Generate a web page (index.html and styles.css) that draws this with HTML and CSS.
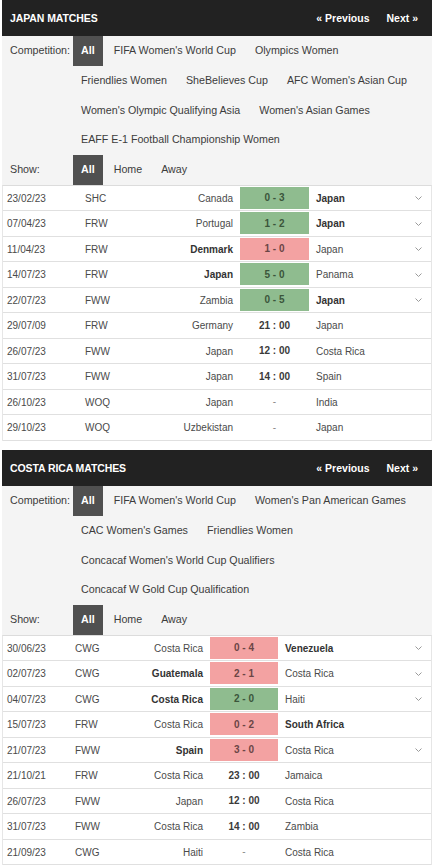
FILE: index.html
```html
<!DOCTYPE html>
<html>
<head>
<meta charset="utf-8">
<link rel="stylesheet" href="styles.css">
</head>
<body>
<div class="page">

<section class="block">
  <div class="head">
    <div class="title">JAPAN MATCHES</div>
    <div class="nav"><span>« Previous</span><span>Next »</span></div>
  </div>
  <div class="filters">
    <div class="frow">
      <div class="flabel">Competition:</div>
      <div class="opts">
        <span class="opt active">All</span>
        <span class="opt">FIFA Women's World Cup</span>
        <span class="opt">Olympics Women</span>
        <span class="opt">Friendlies Women</span>
        <span class="opt">SheBelieves Cup</span>
        <span class="opt">AFC Women's Asian Cup</span>
        <span class="opt">Women's Olympic Qualifying Asia</span>
        <span class="opt">Women's Asian Games</span>
        <span class="opt">EAFF E-1 Football Championship Women</span>
      </div>
    </div>
    <div class="frow">
      <div class="flabel">Show:</div>
      <div class="opts">
        <span class="opt active">All</span>
        <span class="opt">Home</span>
        <span class="opt">Away</span>
      </div>
    </div>
  </div>
  <div class="table jp">
    <div class="row"><span class="date">23/02/23</span><span class="comp">SHC</span><span class="home">Canada</span><span class="score win">0 - 3</span><span class="away b">Japan</span><span class="chev"><svg width="7" height="4" viewBox="0 0 7 4"><polyline points="0.5,0.5 3.5,3.5 6.5,0.5" fill="none" stroke="#9a9a9a" stroke-width="1"/></svg></span></div>
    <div class="row"><span class="date">07/04/23</span><span class="comp">FRW</span><span class="home">Portugal</span><span class="score win">1 - 2</span><span class="away b">Japan</span><span class="chev"><svg width="7" height="4" viewBox="0 0 7 4"><polyline points="0.5,0.5 3.5,3.5 6.5,0.5" fill="none" stroke="#9a9a9a" stroke-width="1"/></svg></span></div>
    <div class="row"><span class="date">11/04/23</span><span class="comp">FRW</span><span class="home b">Denmark</span><span class="score loss">1 - 0</span><span class="away">Japan</span><span class="chev"><svg width="7" height="4" viewBox="0 0 7 4"><polyline points="0.5,0.5 3.5,3.5 6.5,0.5" fill="none" stroke="#9a9a9a" stroke-width="1"/></svg></span></div>
    <div class="row"><span class="date">14/07/23</span><span class="comp">FRW</span><span class="home b">Japan</span><span class="score win">5 - 0</span><span class="away">Panama</span><span class="chev"><svg width="7" height="4" viewBox="0 0 7 4"><polyline points="0.5,0.5 3.5,3.5 6.5,0.5" fill="none" stroke="#9a9a9a" stroke-width="1"/></svg></span></div>
    <div class="row"><span class="date">22/07/23</span><span class="comp">FWW</span><span class="home">Zambia</span><span class="score win">0 - 5</span><span class="away b">Japan</span><span class="chev"><svg width="7" height="4" viewBox="0 0 7 4"><polyline points="0.5,0.5 3.5,3.5 6.5,0.5" fill="none" stroke="#9a9a9a" stroke-width="1"/></svg></span></div>
    <div class="row"><span class="date">29/07/09</span><span class="comp">FRW</span><span class="home">Germany</span><span class="score time">21 : 00</span><span class="away">Japan</span><span class="chev"></span></div>
    <div class="row"><span class="date">26/07/23</span><span class="comp">FWW</span><span class="home">Japan</span><span class="score time">12 : 00</span><span class="away">Costa Rica</span><span class="chev"></span></div>
    <div class="row"><span class="date">31/07/23</span><span class="comp">FWW</span><span class="home">Japan</span><span class="score time">14 : 00</span><span class="away">Spain</span><span class="chev"></span></div>
    <div class="row"><span class="date">26/10/23</span><span class="comp">WOQ</span><span class="home">Japan</span><span class="score dash">-</span><span class="away">India</span><span class="chev"></span></div>
    <div class="row"><span class="date">29/10/23</span><span class="comp">WOQ</span><span class="home">Uzbekistan</span><span class="score dash">-</span><span class="away">Japan</span><span class="chev"></span></div>
  </div>
</section>

<section class="block second">
  <div class="head">
    <div class="title">COSTA RICA MATCHES</div>
    <div class="nav"><span>« Previous</span><span>Next »</span></div>
  </div>
  <div class="filters">
    <div class="frow">
      <div class="flabel">Competition:</div>
      <div class="opts">
        <span class="opt active">All</span>
        <span class="opt">FIFA Women's World Cup</span>
        <span class="opt">Women's Pan American Games</span>
        <span class="opt">CAC Women's Games</span>
        <span class="opt">Friendlies Women</span>
        <span class="opt">Concacaf Women's World Cup Qualifiers</span>
        <span class="opt">Concacaf W Gold Cup Qualification</span>
      </div>
    </div>
    <div class="frow">
      <div class="flabel">Show:</div>
      <div class="opts">
        <span class="opt active">All</span>
        <span class="opt">Home</span>
        <span class="opt">Away</span>
      </div>
    </div>
  </div>
  <div class="table cr">
    <div class="row"><span class="date">30/06/23</span><span class="comp">CWG</span><span class="home">Costa Rica</span><span class="score loss">0 - 4</span><span class="away b">Venezuela</span><span class="chev"><svg width="7" height="4" viewBox="0 0 7 4"><polyline points="0.5,0.5 3.5,3.5 6.5,0.5" fill="none" stroke="#9a9a9a" stroke-width="1"/></svg></span></div>
    <div class="row"><span class="date">02/07/23</span><span class="comp">CWG</span><span class="home b">Guatemala</span><span class="score loss">2 - 1</span><span class="away">Costa Rica</span><span class="chev"><svg width="7" height="4" viewBox="0 0 7 4"><polyline points="0.5,0.5 3.5,3.5 6.5,0.5" fill="none" stroke="#9a9a9a" stroke-width="1"/></svg></span></div>
    <div class="row"><span class="date">04/07/23</span><span class="comp">CWG</span><span class="home b">Costa Rica</span><span class="score win">2 - 0</span><span class="away">Haiti</span><span class="chev"><svg width="7" height="4" viewBox="0 0 7 4"><polyline points="0.5,0.5 3.5,3.5 6.5,0.5" fill="none" stroke="#9a9a9a" stroke-width="1"/></svg></span></div>
    <div class="row"><span class="date">15/07/23</span><span class="comp">FRW</span><span class="home">Costa Rica</span><span class="score loss">0 - 2</span><span class="away b">South Africa</span><span class="chev"></span></div>
    <div class="row"><span class="date">21/07/23</span><span class="comp">FWW</span><span class="home b">Spain</span><span class="score loss">3 - 0</span><span class="away">Costa Rica</span><span class="chev"><svg width="7" height="4" viewBox="0 0 7 4"><polyline points="0.5,0.5 3.5,3.5 6.5,0.5" fill="none" stroke="#9a9a9a" stroke-width="1"/></svg></span></div>
    <div class="row"><span class="date">21/10/21</span><span class="comp">FRW</span><span class="home">Costa Rica</span><span class="score time">23 : 00</span><span class="away">Jamaica</span><span class="chev"></span></div>
    <div class="row"><span class="date">26/07/23</span><span class="comp">FWW</span><span class="home">Japan</span><span class="score time">12 : 00</span><span class="away">Costa Rica</span><span class="chev"></span></div>
    <div class="row"><span class="date">31/07/23</span><span class="comp">FWW</span><span class="home">Costa Rica</span><span class="score time">14 : 00</span><span class="away">Zambia</span><span class="chev"></span></div>
    <div class="row"><span class="date">21/09/23</span><span class="comp">CWG</span><span class="home">Haiti</span><span class="score dash">-</span><span class="away">Costa Rica</span><span class="chev"></span></div>
  </div>
</section>

</div>
</body>
</html>
```

FILE: styles.css
```css
html, body {
  margin: 0;
  padding: 0;
  background: #ffffff;
}

body {
  font-family: "Liberation Sans", Arial, sans-serif;
  color: #444;
}

.page {
  padding: 0 1px 0 2px;
}

.block.second {
  margin-top: 9px;
}

.head {
  height: 36px;
  background: #222222;
  color: #ffffff;
  display: flex;
  align-items: center;
  justify-content: space-between;
  padding: 0 14px 0 8px;
}

.title {
  font-size: 10.5px;
  font-weight: bold;
  letter-spacing: -0.1px;
}

.nav {
  display: flex;
  gap: 17px;
  font-size: 10.5px;
  font-weight: bold;
}

.filters {
  background: #f4f4f4;
  font-size: 10.7px;
  color: #3c3c3c;
}

.frow {
  display: flex;
}

.flabel {
  width: 63px;
  padding-left: 8px;
  height: 29.8px;
  line-height: 29.8px;
  flex: none;
}

.opts {
  display: flex;
  flex-wrap: wrap;
  flex: 1;
}

.opt {
  height: 29.8px;
  line-height: 29.8px;
  padding: 0 8px;
  margin-right: 3px;
  white-space: nowrap;
}

.opt.active {
  background: #505050;
  color: #ffffff;
  font-weight: bold;
}

.table {
  border-top: 1px solid #dcdcdc;
  border-left: 1px solid #e6e6e6;
  border-right: 1px solid #e6e6e6;
  font-size: 10px;
}

.row {
  display: grid;
  height: 25.5px;
  box-sizing: border-box;
  border-bottom: 1px solid #e0e0e0;
  align-items: stretch;
}

.table.jp .row {
  grid-template-columns: 82px 70px 85px 69px 1fr 22px;
}

.table.cr .row {
  grid-template-columns: 72px 55px 80px 68px 1fr 22px;
}

.row > span {
  display: flex;
  align-items: center;
  white-space: nowrap;
}

.date {
  padding-left: 4px;
  color: #4a4a4a;
}

.comp {
  color: #4a4a4a;
}

.home {
  justify-content: flex-end;
  padding-right: 7px;
  color: #4a4a4a;
}

.away {
  padding-left: 7px;
  color: #4a4a4a;
}

.b {
  font-weight: bold;
  color: #333;
}

.score {
  justify-content: center;
  font-weight: bold;
  color: #3a3a3a;
  margin: 1px 0 1.5px;
}

.score.win {
  background: #8fbc8f;
  color: #3b553b;
}

.score.loss {
  background: #f3a2a2;
  color: #6a4545;
}

.score.dash {
  font-weight: normal;
  color: #888;
}

.chev {
  justify-content: center;
  padding-right: 4px;
}
```
